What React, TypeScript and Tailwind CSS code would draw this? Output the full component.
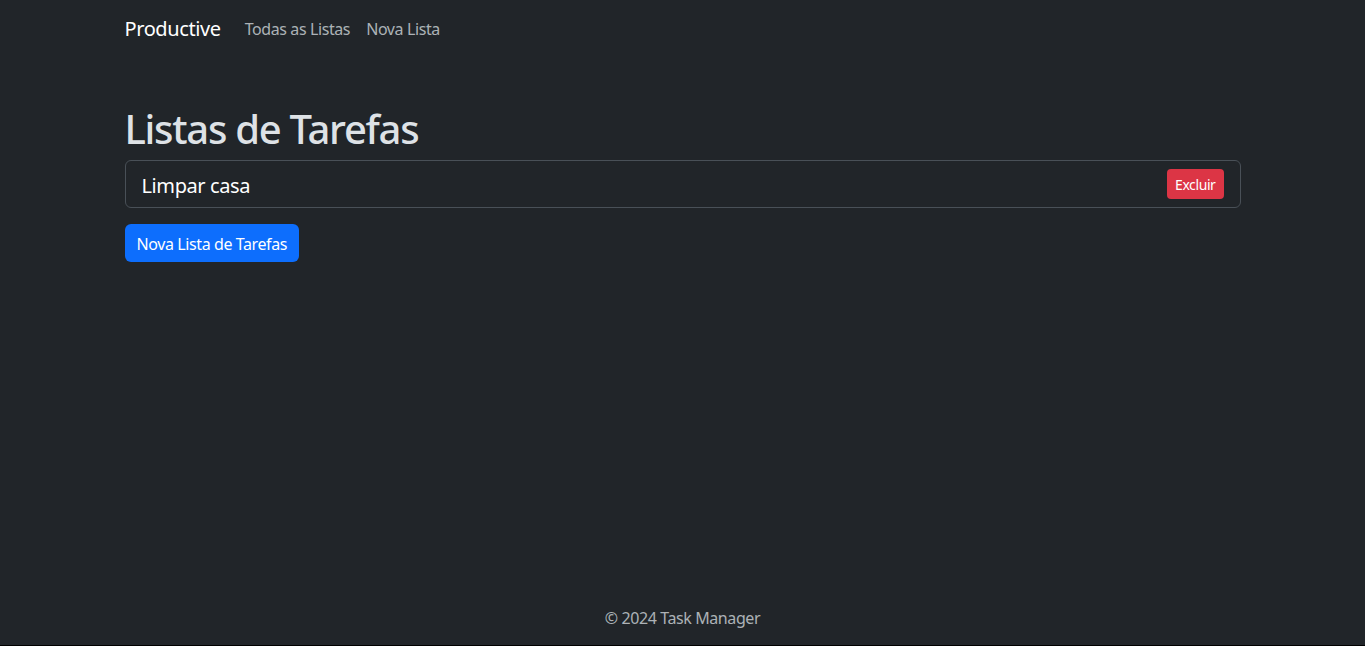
import React from "react";

const App: React.FC = () => {
  return (
    <div className="min-h-screen flex flex-col bg-[#212529] text-[#dee2e6] font-['Noto_Sans',sans-serif] tracking-[-0.025em] text-base leading-6 border-b border-black">
      <nav className="pt-[9px] pb-[7px]">
        <div className="w-[1140px] mx-auto px-3 flex items-center">
          <a className="py-[5px] mr-4 text-xl leading-[30px] text-white">Productive</a>
          <div className="flex">
            <a className="px-2 py-2 text-[#dee2e6]/75">Todas as Listas</a>
            <a className="px-2 py-2 text-[#dee2e6]/75">Nova Lista</a>
          </div>
        </div>
      </nav>

      <main className="w-[1140px] mx-auto px-3 mt-12">
        <h1 className="h-12 pt-[2px] text-[40px] leading-[46px] font-medium tracking-[-0.032em] mb-2">
          Listas de Tarefas
        </h1>
        <ul className="border border-[#495057] rounded-md">
          <li className="h-[46px] px-4 flex items-center justify-between">
            <span className="pt-[3px] text-xl leading-[30px] text-white">Limpar casa</span>
            <button className="h-[30px] px-2 rounded bg-[#dc3545] text-white text-sm leading-[21px]">
              Excluir
            </button>
          </li>
        </ul>
        <button className="mt-4 h-[38px] px-3 pt-[2px] rounded-md bg-[#0d6efd] text-white text-base leading-6">
          Nova Lista de Tarefas
        </button>
      </main>

      <footer className="mt-auto pt-[17px] pb-[15px] text-center text-[#dee2e6]/75">
        © 2024 Task Manager
      </footer>
    </div>
  );
};

export default App;
